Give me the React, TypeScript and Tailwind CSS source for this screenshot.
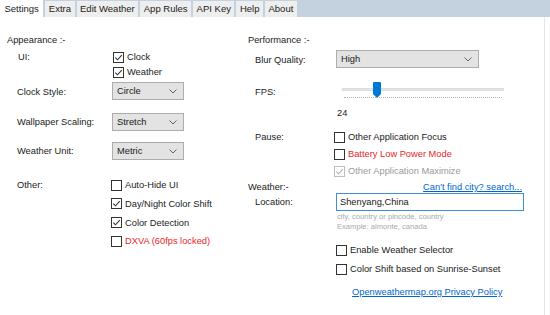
import { ReactNode } from "react";

const tabs = ["Settings", "Extra", "Edit Weather", "App Rules", "API Key", "Help", "About"];

function Check({ checked = false, disabled = false }: { checked?: boolean; disabled?: boolean }) {
  const stroke = disabled ? "#bdbdbd" : "#333";
  return (
    <svg width="11" height="11" viewBox="0 0 11 11" className="shrink-0">
      <rect x="0.5" y="0.5" width="10" height="10" fill="white" stroke={stroke} />
      {checked && (
        <path d="M2.3 5.6 L4.5 7.8 L8.8 3.2" fill="none" stroke={disabled ? "#b0b0b0" : "#333"} strokeWidth="1.1" />
      )}
    </svg>
  );
}

function CheckRow({
  label,
  checked,
  disabled,
  red,
}: {
  label: string;
  checked?: boolean;
  disabled?: boolean;
  red?: boolean;
}) {
  return (
    <div className="flex items-center gap-[3px] h-[12px]">
      <Check checked={checked} disabled={disabled} />
      <span className={red ? "text-[#e8262a]" : disabled ? "text-[#9a9a9a]" : "text-[#1a1a1a]"}>{label}</span>
    </div>
  );
}

function Select({ value, width }: { value: string; width: string }) {
  return (
    <div className={`${width} h-[18px] border border-[#adadad] bg-[#e3e3e3] flex items-center justify-between pl-[4px] pr-[6px]`}>
      <span>{value}</span>
      <svg width="8" height="5" viewBox="0 0 8 5">
        <path d="M0.5 0.5 L4 4 L7.5 0.5" fill="none" stroke="#555" strokeWidth="0.9" />
      </svg>
    </div>
  );
}

function Row({ label, labelW, children, className = "" }: { label: string; labelW: string; children: ReactNode; className?: string }) {
  return (
    <div className={`flex items-center ${className}`}>
      <span className={`${labelW} shrink-0`}>{label}</span>
      {children}
    </div>
  );
}

function Slider() {
  return (
    <div className="relative w-[162px] h-[18px]">
      <div className="absolute left-0 right-0 top-[6px] h-[3px] bg-[#e6e6e6] border border-[#dcdcdc]" />
      <svg className="absolute left-[31px] top-0" width="8" height="16" viewBox="0 0 8 16">
        <path d="M0 1 Q0 0 1 0 L7 0 Q8 0 8 1 L8 12 L4 16 L0 12 Z" fill="#0078d7" />
      </svg>
      <div className="absolute left-[2px] right-[2px] top-[15px] h-[2px] border-t border-dotted border-[#b5b5b5]" />
    </div>
  );
}

export default function App() {
  return (
    <div
      className="w-[550px] h-[315px] bg-white text-[9.3px] text-[#1a1a1a] leading-[12px] overflow-hidden flex flex-col"
      style={{ fontFamily: '"Liberation Sans", Arial, sans-serif' }}
    >
      <div className="h-[17px] bg-[#c3d2de] flex items-end gap-[2px] shrink-0">
        {tabs.map((t, i) => (
          <div
            key={t}
            className={
              i === 0
                ? "h-[17px] px-[4.5px] bg-white flex items-center text-[9.5px]"
                : "h-[16px] px-[3.5px] bg-[#eeeeee] flex items-center text-[9.5px]"
            }
          >
            {t}
          </div>
        ))}
      </div>

      <div className="flex-1 flex border-r border-[#e6e6e6] mr-[5px]">
        {/* left column */}
        <div className="w-[248px] pl-[7px] pt-[17px] flex flex-col shrink-0">
          <div>Appearance :-</div>
          <Row label="UI:" labelW="w-[106px] pl-[11px]" className="mt-[5px]">
            <CheckRow label="Clock" checked />
          </Row>
          <div className="pl-[106px] mt-[3px]">
            <CheckRow label="Weather" checked />
          </div>
          <Row label="Clock Style:" labelW="w-[105px] pl-[10px] pt-[2px]" className="mt-[4px]">
            <Select value="Circle" width="w-[72px]" />
          </Row>
          <Row label="Wallpaper Scaling:" labelW="w-[105px] pl-[10px]" className="mt-[13px]">
            <Select value="Stretch" width="w-[72px]" />
          </Row>
          <Row label="Weather Unit:" labelW="w-[105px] pl-[10px]" className="mt-[11px]">
            <Select value="Metric" width="w-[72px]" />
          </Row>
          <div className="flex mt-[19px]">
            <span className="w-[104px] pl-[10px] shrink-0">Other:</span>
            <div className="flex flex-col gap-[6.8px]">
              <CheckRow label="Auto-Hide UI" />
              <CheckRow label="Day/Night Color Shift" checked />
              <CheckRow label="Color Detection" checked />
              <CheckRow label="DXVA (60fps locked)" red />
            </div>
          </div>
        </div>

        {/* right column */}
        <div className="flex-1 pt-[17px] flex flex-col">
          <div>Performance :-</div>
          <Row label="Blur Quality:" labelW="w-[88px] pl-[7px] pt-[2px]" className="mt-[4px]">
            <Select value="High" width="w-[143px]" />
          </Row>
          <Row label="FPS:" labelW="w-[94px] pl-[7px] pt-[2px]" className="mt-[14px]">
            <Slider />
          </Row>
          <div className="pl-[89px] mt-[7px]">24</div>
          <div className="flex mt-[12px]">
            <span className="w-[86px] pl-[7px] shrink-0">Pause:</span>
            <div className="flex flex-col gap-[5px]">
              <CheckRow label="Other Application Focus" />
              <CheckRow label="Battery Low Power Mode" red />
              <CheckRow label="Other Application Maximize" checked disabled />
            </div>
          </div>
          <div className="flex items-center justify-between mt-[4px] pr-[22px]">
            <span>Weather:-</span>
            <a className="text-[#0066cc] underline">Can't find city? search...</a>
          </div>
          <Row label="Location:" labelW="w-[88px] pl-[7px]" className="mt-0">
            <div className="w-[188px] h-[18px] border border-[#3c8fd8] bg-white flex items-center pl-[3px]">
              Shenyang,China
            </div>
          </Row>
          <div className="pl-[89px] mt-[1px] text-[7.6px] leading-[10px] text-[#a9a9a9]">
            <div>city, country or pincode, country</div>
            <div>Example: almonte, canada</div>
          </div>
          <div className="pl-[88px] mt-[12px] flex flex-col gap-[7px]">
            <CheckRow label="Enable Weather Selector" />
            <CheckRow label="Color Shift based on Sunrise-Sunset" />
          </div>
          <div className="pl-[104px] mt-[11px]">
            <a className="text-[#0066cc] underline">Openweathermap.org Privacy Policy</a>
          </div>
        </div>
      </div>
    </div>
  );
}
